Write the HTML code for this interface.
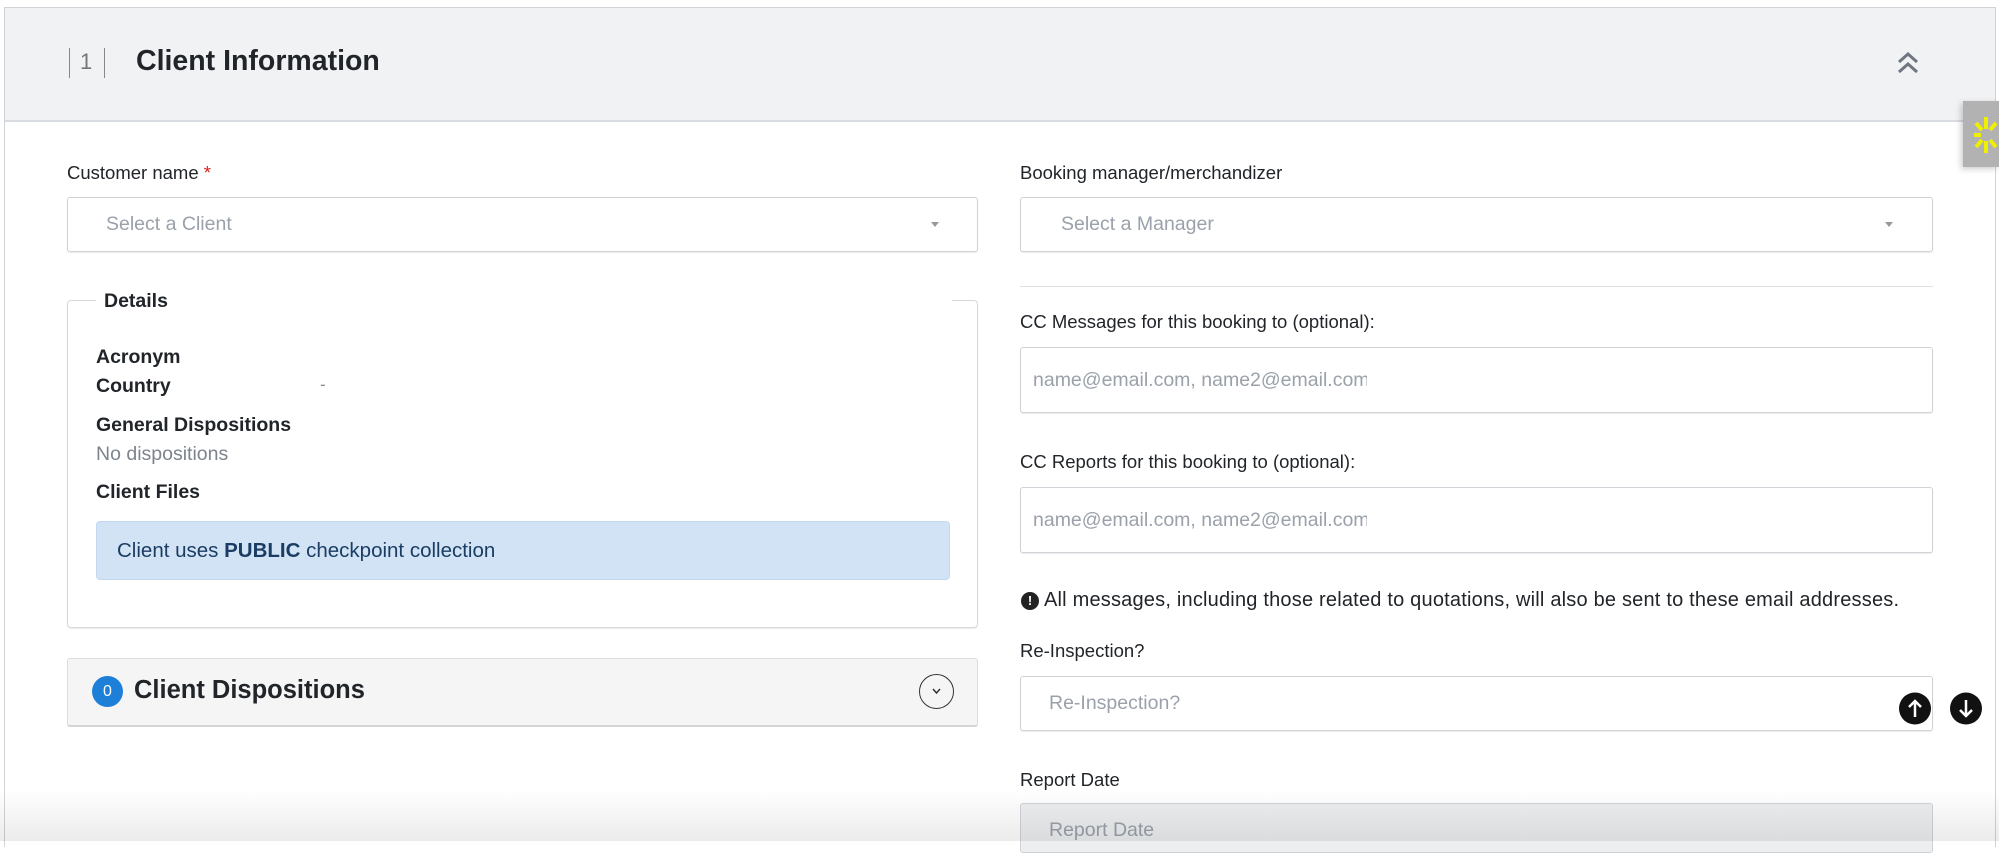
<!DOCTYPE html>
<html><head><meta charset="utf-8"><style>
*{box-sizing:border-box;margin:0;padding:0}
body{width:1999px;height:841px;overflow:hidden;background:#fff;font-family:"Liberation Sans",sans-serif;color:#212529;position:relative}
.abs{position:absolute}
.panel{left:4px;top:7px;width:1992px;height:840px;border:1px solid #d0d3d7;border-bottom:none}
.header{left:5px;top:8px;width:1990px;height:114px;background:#f1f2f4;border-bottom:2px solid #d8dbdf}
.lbl{font-size:18.5px;color:#212529}
.box{border:1px solid #cfd3d7;border-radius:3px;background:#fff;box-shadow:0 1px 1px rgba(0,0,0,.08)}
.ph{font-size:19.5px;color:#9aa1aa}
.b{font-weight:bold;font-size:19.5px}
</style></head><body>
<div class="abs panel"></div>
<div class="abs header"></div>
<div class="abs" style="left:69px;top:48px;height:30px;width:1px;background:#888"></div>
<div class="abs" style="left:80px;top:49px;font-size:22px;color:#777">1</div>
<div class="abs" style="left:104px;top:48px;height:30px;width:1px;background:#888"></div>
<div class="abs" style="left:136px;top:45px;font-size:28.5px;font-weight:bold;color:#212529">Client Information</div>
<svg class="abs" style="left:1896px;top:50px" width="24" height="26" viewBox="0 0 24 26"><path d="M3 12 L12 4 L21 12 M3 22 L12 14 L21 22" fill="none" stroke="#6e7680" stroke-width="3"/></svg>
<div class="abs" style="left:1963px;top:101px;width:36px;height:66px;background:#b3b2b3;box-shadow:-2px 2px 6px rgba(0,0,0,.2)"></div>
<svg class="abs" style="left:1970px;top:115px" width="29" height="40" viewBox="0 0 29 40"><g stroke="#eef000" stroke-width="4" stroke-linecap="butt"><line x1="16" y1="2" x2="16" y2="14"/><line x1="16" y1="26" x2="16" y2="38"/><line x1="4" y1="20" x2="11" y2="20"/><line x1="6" y1="8" x2="12" y2="15"/><line x1="6" y1="32" x2="12" y2="25"/><line x1="26" y1="8" x2="20" y2="15"/><line x1="26" y1="32" x2="20" y2="25"/></g></svg>

<div class="abs lbl" style="left:67px;top:162px">Customer name <span style="color:#e02020">*</span></div>
<div class="abs box" style="left:67px;top:197px;width:911px;height:55px"></div>
<div class="abs ph" style="left:106px;top:213px">Select a Client</div>
<div class="abs" style="left:931px;top:222px;border:4px solid transparent;border-top:5px solid #999"></div>

<div class="abs" style="left:67px;top:300px;width:911px;height:328px;border:1px solid #d6d9dc;border-radius:4px;box-shadow:0 1px 1px rgba(0,0,0,.08)"></div>
<div class="abs" style="left:96px;top:292px;width:856px;height:14px;background:#fff"></div>
<div class="abs b" style="left:104px;top:290px">Details</div>
<div class="abs b" style="left:96px;top:346px">Acronym</div>
<div class="abs b" style="left:96px;top:375px">Country</div>
<div class="abs" style="left:320px;top:375px;color:#888;font-size:17px">-</div>
<div class="abs b" style="left:96px;top:414px">General Dispositions</div>
<div class="abs" style="left:96px;top:443px;font-size:19.5px;color:#7d848c">No dispositions</div>
<div class="abs b" style="left:96px;top:481px">Client Files</div>
<div class="abs" style="left:96px;top:521px;width:854px;height:59px;background:#d2e3f5;border:1px solid #c3d8ef;border-radius:4px"></div>
<div class="abs" style="left:117px;top:539px;font-size:20.5px;color:#1b3d63">Client uses <b>PUBLIC</b> checkpoint collection</div>

<div class="abs" style="left:67px;top:658px;width:911px;height:69px;background:#f5f5f5;border:1px solid #dcdcdc;border-bottom:2px solid #d4d4d4;border-radius:3px"></div>
<div class="abs" style="left:92px;top:676px;width:31px;height:31px;border-radius:50%;background:#1e7fd8;color:#fff;font-size:16px;text-align:center;line-height:31px">0</div>
<div class="abs" style="left:134px;top:676px;font-size:25.5px;font-weight:bold">Client Dispositions</div>
<div class="abs" style="left:919px;top:674px;width:35px;height:35px;border-radius:50%;border:1.5px solid #333"></div>
<svg class="abs" style="left:930px;top:686px" width="13" height="10" viewBox="0 0 13 10"><path d="M3 3 L6.5 7 L10 3" fill="none" stroke="#333" stroke-width="1.5"/></svg>

<div class="abs lbl" style="left:1020px;top:162px">Booking manager/merchandizer</div>
<div class="abs box" style="left:1020px;top:197px;width:913px;height:55px"></div>
<div class="abs ph" style="left:1061px;top:213px">Select a Manager</div>
<div class="abs" style="left:1885px;top:222px;border:4px solid transparent;border-top:5px solid #999"></div>
<div class="abs" style="left:1020px;top:286px;width:913px;height:1px;background:#dfe2e5"></div>

<div class="abs lbl" style="left:1020px;top:311px">CC Messages for this booking to (optional):</div>
<div class="abs box" style="left:1020px;top:347px;width:913px;height:66px"></div>
<div class="abs ph" style="left:1033px;top:369px;width:334px;overflow:hidden;white-space:nowrap">name@email.com, name2@email.com</div>

<div class="abs lbl" style="left:1020px;top:451px">CC Reports for this booking to (optional):</div>
<div class="abs box" style="left:1020px;top:487px;width:913px;height:66px"></div>
<div class="abs ph" style="left:1033px;top:509px;width:334px;overflow:hidden;white-space:nowrap">name@email.com, name2@email.com</div>

<div class="abs" style="left:1021px;top:592px;width:18px;height:18px;border-radius:50%;background:#222;color:#fff;font-size:13px;font-weight:bold;text-align:center;line-height:18px">!</div>
<div class="abs" style="left:1044px;top:589px;font-size:20px;letter-spacing:0.2px">All messages, including those related to quotations, will also be sent to these email addresses.</div>

<div class="abs lbl" style="left:1020px;top:640px">Re-Inspection?</div>
<div class="abs box" style="left:1020px;top:676px;width:913px;height:55px"></div>
<div class="abs ph" style="left:1049px;top:692px">Re-Inspection?</div>
<svg class="abs" style="left:1899px;top:692px" width="84" height="33" viewBox="0 0 84 33"><circle cx="16" cy="16.5" r="16" fill="#111"/><path d="M16 25 V9 M10 15 L16 9 L22 15" stroke="#fff" stroke-width="2.5" fill="none"/><circle cx="67" cy="16.5" r="16" fill="#111"/><path d="M67 8 V24 M61 18 L67 24 L73 18" stroke="#fff" stroke-width="2.5" fill="none"/></svg>

<div class="abs lbl" style="left:1020px;top:769px">Report Date</div>
<div class="abs" style="left:1020px;top:803px;width:913px;height:50px;background:#eceef0;border:1px solid #cfd3d7;border-radius:3px"></div>
<div class="abs ph" style="left:1049px;top:819px">Report Date</div>

<div class="abs" style="left:0;top:790px;width:1999px;height:51px;background:linear-gradient(to bottom,rgba(0,0,0,0),rgba(0,0,0,.08));pointer-events:none"></div>
</body></html>
